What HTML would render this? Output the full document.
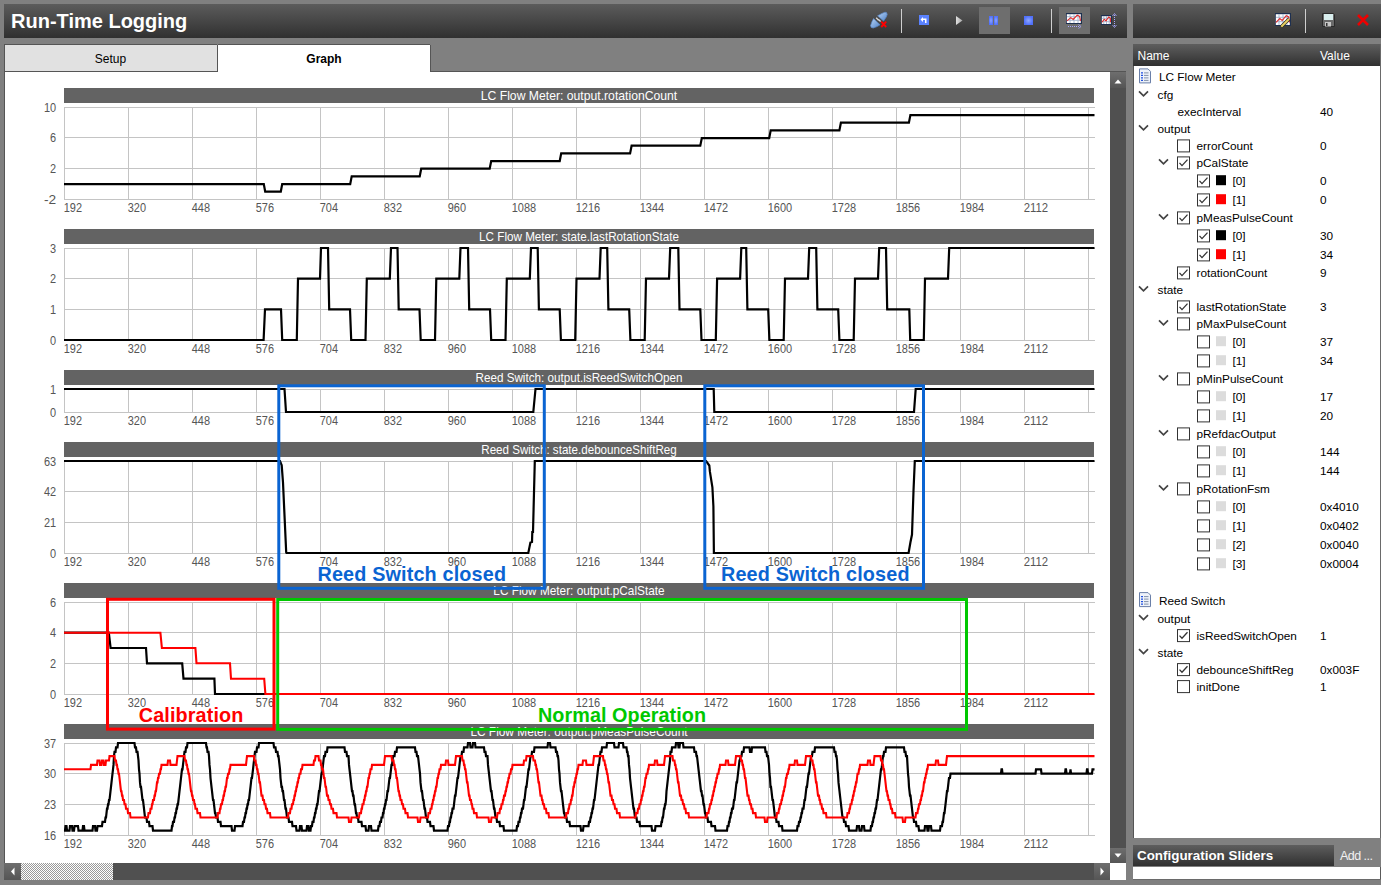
<!DOCTYPE html><html><head><meta charset="utf-8"><style>
html,body{margin:0;padding:0;width:1381px;height:885px;overflow:hidden;background:#808080;}
svg text{font-family:"Liberation Sans", sans-serif;}
</style></head><body>
<svg width="1381" height="885" viewBox="0 0 1381 885" style="position:absolute;left:0;top:0">
<defs>
<linearGradient id="tb" x1="0" y1="0" x2="0" y2="1"><stop offset="0" stop-color="#5c5c5c"/><stop offset="1" stop-color="#303030"/></linearGradient>
<linearGradient id="hd" x1="0" y1="0" x2="0" y2="1"><stop offset="0" stop-color="#5e5e5e"/><stop offset="1" stop-color="#303030"/></linearGradient>
<linearGradient id="sb" x1="0" y1="0" x2="0" y2="1"><stop offset="0" stop-color="#6e6e6e"/><stop offset="1" stop-color="#555"/></linearGradient>
<pattern id="chk" width="2" height="2" patternUnits="userSpaceOnUse"><rect width="2" height="2" fill="#fff"/><rect width="1" height="1" fill="#9a9a9a"/><rect x="1" y="1" width="1" height="1" fill="#9a9a9a"/></pattern>
</defs>
<rect width="1381" height="885" fill="#808080"/>
<rect x="4" y="4" width="1123" height="34" fill="url(#tb)"/>
<text x="11" y="28" fill="#fff" font-size="20" font-weight="bold">Run-Time Logging</text>
<rect x="1133" y="4" width="248" height="34" fill="url(#tb)"/>
<rect x="4.5" y="44.5" width="213" height="27" fill="#e1e1e1" stroke="#555" stroke-width="1"/>
<text x="110.5" y="63" text-anchor="middle" fill="#000" font-size="12">Setup</text>
<rect x="430" y="71" width="696" height="1" fill="#555"/>
<rect x="4" y="72" width="1106" height="791" fill="#fff"/>
<rect x="4" y="72" width="1" height="807" fill="#555"/>
<rect x="217" y="44" width="214" height="28" fill="#fff"/>
<path d="M217.5 72 V44.5 H430.5 V72" fill="none" stroke="#555" stroke-width="1"/>
<text x="324" y="63" text-anchor="middle" fill="#000" font-size="12" font-weight="bold">Graph</text>
<rect x="64" y="88" width="1030" height="15" fill="#636363"/>
<text x="579.0" y="100" text-anchor="middle" fill="#fff" font-size="12.2" textLength="196.5" lengthAdjust="spacingAndGlyphs">LC Flow Meter: output.rotationCount</text>
<path d="M64 107.5H1095 M64 137.5H1095 M64 168.5H1095 M64 199.5H1095 M64.5 107V200 M128.5 107V200 M192.5 107V200 M256.5 107V200 M320.5 107V200 M384.5 107V200 M448.5 107V200 M512.5 107V200 M576.5 107V200 M640.5 107V200 M704.5 107V200 M768.5 107V200 M832.5 107V200 M896.5 107V200 M960.5 107V200 M1024.5 107V200 M1088.5 107V200" stroke="#c4c4c4" stroke-width="1" fill="none" shape-rendering="crispEdges"/>
<text x="56.1" y="111.7" text-anchor="end" fill="#555" font-size="12" textLength="12.2" lengthAdjust="spacingAndGlyphs">10</text>
<text x="56.1" y="142.4" text-anchor="end" fill="#555" font-size="12" textLength="6.1" lengthAdjust="spacingAndGlyphs">6</text>
<text x="56.1" y="173.0" text-anchor="end" fill="#555" font-size="12" textLength="6.1" lengthAdjust="spacingAndGlyphs">2</text>
<text x="56.1" y="203.7" text-anchor="end" fill="#555" font-size="12" textLength="12.2" lengthAdjust="spacingAndGlyphs">-2</text>
<text x="63.7" y="211.5" fill="#555" font-size="12" textLength="18.3" lengthAdjust="spacingAndGlyphs">192</text>
<text x="127.7" y="211.5" fill="#555" font-size="12" textLength="18.3" lengthAdjust="spacingAndGlyphs">320</text>
<text x="191.7" y="211.5" fill="#555" font-size="12" textLength="18.3" lengthAdjust="spacingAndGlyphs">448</text>
<text x="255.7" y="211.5" fill="#555" font-size="12" textLength="18.3" lengthAdjust="spacingAndGlyphs">576</text>
<text x="319.7" y="211.5" fill="#555" font-size="12" textLength="18.3" lengthAdjust="spacingAndGlyphs">704</text>
<text x="383.7" y="211.5" fill="#555" font-size="12" textLength="18.3" lengthAdjust="spacingAndGlyphs">832</text>
<text x="447.7" y="211.5" fill="#555" font-size="12" textLength="18.3" lengthAdjust="spacingAndGlyphs">960</text>
<text x="511.7" y="211.5" fill="#555" font-size="12" textLength="24.4" lengthAdjust="spacingAndGlyphs">1088</text>
<text x="575.7" y="211.5" fill="#555" font-size="12" textLength="24.4" lengthAdjust="spacingAndGlyphs">1216</text>
<text x="639.7" y="211.5" fill="#555" font-size="12" textLength="24.4" lengthAdjust="spacingAndGlyphs">1344</text>
<text x="703.7" y="211.5" fill="#555" font-size="12" textLength="24.4" lengthAdjust="spacingAndGlyphs">1472</text>
<text x="767.7" y="211.5" fill="#555" font-size="12" textLength="24.4" lengthAdjust="spacingAndGlyphs">1600</text>
<text x="831.7" y="211.5" fill="#555" font-size="12" textLength="24.4" lengthAdjust="spacingAndGlyphs">1728</text>
<text x="895.7" y="211.5" fill="#555" font-size="12" textLength="24.4" lengthAdjust="spacingAndGlyphs">1856</text>
<text x="959.7" y="211.5" fill="#555" font-size="12" textLength="24.4" lengthAdjust="spacingAndGlyphs">1984</text>
<text x="1023.7" y="211.5" fill="#555" font-size="12" textLength="24.4" lengthAdjust="spacingAndGlyphs">2112</text>
<rect x="64" y="229" width="1030" height="15" fill="#636363"/>
<text x="579.0" y="241" text-anchor="middle" fill="#fff" font-size="12.2" textLength="199.8" lengthAdjust="spacingAndGlyphs">LC Flow Meter: state.lastRotationState</text>
<path d="M64 248.5H1095 M64 278.5H1095 M64 309.5H1095 M64 340.5H1095 M64.5 248V341 M128.5 248V341 M192.5 248V341 M256.5 248V341 M320.5 248V341 M384.5 248V341 M448.5 248V341 M512.5 248V341 M576.5 248V341 M640.5 248V341 M704.5 248V341 M768.5 248V341 M832.5 248V341 M896.5 248V341 M960.5 248V341 M1024.5 248V341 M1088.5 248V341" stroke="#c4c4c4" stroke-width="1" fill="none" shape-rendering="crispEdges"/>
<text x="56.1" y="252.7" text-anchor="end" fill="#555" font-size="12" textLength="6.1" lengthAdjust="spacingAndGlyphs">3</text>
<text x="56.1" y="283.4" text-anchor="end" fill="#555" font-size="12" textLength="6.1" lengthAdjust="spacingAndGlyphs">2</text>
<text x="56.1" y="314.0" text-anchor="end" fill="#555" font-size="12" textLength="6.1" lengthAdjust="spacingAndGlyphs">1</text>
<text x="56.1" y="344.7" text-anchor="end" fill="#555" font-size="12" textLength="6.1" lengthAdjust="spacingAndGlyphs">0</text>
<text x="63.7" y="352.5" fill="#555" font-size="12" textLength="18.3" lengthAdjust="spacingAndGlyphs">192</text>
<text x="127.7" y="352.5" fill="#555" font-size="12" textLength="18.3" lengthAdjust="spacingAndGlyphs">320</text>
<text x="191.7" y="352.5" fill="#555" font-size="12" textLength="18.3" lengthAdjust="spacingAndGlyphs">448</text>
<text x="255.7" y="352.5" fill="#555" font-size="12" textLength="18.3" lengthAdjust="spacingAndGlyphs">576</text>
<text x="319.7" y="352.5" fill="#555" font-size="12" textLength="18.3" lengthAdjust="spacingAndGlyphs">704</text>
<text x="383.7" y="352.5" fill="#555" font-size="12" textLength="18.3" lengthAdjust="spacingAndGlyphs">832</text>
<text x="447.7" y="352.5" fill="#555" font-size="12" textLength="18.3" lengthAdjust="spacingAndGlyphs">960</text>
<text x="511.7" y="352.5" fill="#555" font-size="12" textLength="24.4" lengthAdjust="spacingAndGlyphs">1088</text>
<text x="575.7" y="352.5" fill="#555" font-size="12" textLength="24.4" lengthAdjust="spacingAndGlyphs">1216</text>
<text x="639.7" y="352.5" fill="#555" font-size="12" textLength="24.4" lengthAdjust="spacingAndGlyphs">1344</text>
<text x="703.7" y="352.5" fill="#555" font-size="12" textLength="24.4" lengthAdjust="spacingAndGlyphs">1472</text>
<text x="767.7" y="352.5" fill="#555" font-size="12" textLength="24.4" lengthAdjust="spacingAndGlyphs">1600</text>
<text x="831.7" y="352.5" fill="#555" font-size="12" textLength="24.4" lengthAdjust="spacingAndGlyphs">1728</text>
<text x="895.7" y="352.5" fill="#555" font-size="12" textLength="24.4" lengthAdjust="spacingAndGlyphs">1856</text>
<text x="959.7" y="352.5" fill="#555" font-size="12" textLength="24.4" lengthAdjust="spacingAndGlyphs">1984</text>
<text x="1023.7" y="352.5" fill="#555" font-size="12" textLength="24.4" lengthAdjust="spacingAndGlyphs">2112</text>
<rect x="64" y="370" width="1030" height="15" fill="#636363"/>
<text x="579.0" y="382" text-anchor="middle" fill="#fff" font-size="12.2" textLength="207" lengthAdjust="spacingAndGlyphs">Reed Switch: output.isReedSwitchOpen</text>
<path d="M64 389.5H1095 M64 412.5H1095 M64.5 389V413 M128.5 389V413 M192.5 389V413 M256.5 389V413 M320.5 389V413 M384.5 389V413 M448.5 389V413 M512.5 389V413 M576.5 389V413 M640.5 389V413 M704.5 389V413 M768.5 389V413 M832.5 389V413 M896.5 389V413 M960.5 389V413 M1024.5 389V413 M1088.5 389V413" stroke="#c4c4c4" stroke-width="1" fill="none" shape-rendering="crispEdges"/>
<text x="56.1" y="393.7" text-anchor="end" fill="#555" font-size="12" textLength="6.1" lengthAdjust="spacingAndGlyphs">1</text>
<text x="56.1" y="416.7" text-anchor="end" fill="#555" font-size="12" textLength="6.1" lengthAdjust="spacingAndGlyphs">0</text>
<text x="63.7" y="424.5" fill="#555" font-size="12" textLength="18.3" lengthAdjust="spacingAndGlyphs">192</text>
<text x="127.7" y="424.5" fill="#555" font-size="12" textLength="18.3" lengthAdjust="spacingAndGlyphs">320</text>
<text x="191.7" y="424.5" fill="#555" font-size="12" textLength="18.3" lengthAdjust="spacingAndGlyphs">448</text>
<text x="255.7" y="424.5" fill="#555" font-size="12" textLength="18.3" lengthAdjust="spacingAndGlyphs">576</text>
<text x="319.7" y="424.5" fill="#555" font-size="12" textLength="18.3" lengthAdjust="spacingAndGlyphs">704</text>
<text x="383.7" y="424.5" fill="#555" font-size="12" textLength="18.3" lengthAdjust="spacingAndGlyphs">832</text>
<text x="447.7" y="424.5" fill="#555" font-size="12" textLength="18.3" lengthAdjust="spacingAndGlyphs">960</text>
<text x="511.7" y="424.5" fill="#555" font-size="12" textLength="24.4" lengthAdjust="spacingAndGlyphs">1088</text>
<text x="575.7" y="424.5" fill="#555" font-size="12" textLength="24.4" lengthAdjust="spacingAndGlyphs">1216</text>
<text x="639.7" y="424.5" fill="#555" font-size="12" textLength="24.4" lengthAdjust="spacingAndGlyphs">1344</text>
<text x="703.7" y="424.5" fill="#555" font-size="12" textLength="24.4" lengthAdjust="spacingAndGlyphs">1472</text>
<text x="767.7" y="424.5" fill="#555" font-size="12" textLength="24.4" lengthAdjust="spacingAndGlyphs">1600</text>
<text x="831.7" y="424.5" fill="#555" font-size="12" textLength="24.4" lengthAdjust="spacingAndGlyphs">1728</text>
<text x="895.7" y="424.5" fill="#555" font-size="12" textLength="24.4" lengthAdjust="spacingAndGlyphs">1856</text>
<text x="959.7" y="424.5" fill="#555" font-size="12" textLength="24.4" lengthAdjust="spacingAndGlyphs">1984</text>
<text x="1023.7" y="424.5" fill="#555" font-size="12" textLength="24.4" lengthAdjust="spacingAndGlyphs">2112</text>
<rect x="64" y="442" width="1030" height="15" fill="#636363"/>
<text x="579.0" y="454" text-anchor="middle" fill="#fff" font-size="12.2" textLength="195.5" lengthAdjust="spacingAndGlyphs">Reed Switch: state.debounceShiftReg</text>
<path d="M64 461.5H1095 M64 491.5H1095 M64 522.5H1095 M64 553.5H1095 M64.5 461V554 M128.5 461V554 M192.5 461V554 M256.5 461V554 M320.5 461V554 M384.5 461V554 M448.5 461V554 M512.5 461V554 M576.5 461V554 M640.5 461V554 M704.5 461V554 M768.5 461V554 M832.5 461V554 M896.5 461V554 M960.5 461V554 M1024.5 461V554 M1088.5 461V554" stroke="#c4c4c4" stroke-width="1" fill="none" shape-rendering="crispEdges"/>
<text x="56.1" y="465.7" text-anchor="end" fill="#555" font-size="12" textLength="12.2" lengthAdjust="spacingAndGlyphs">63</text>
<text x="56.1" y="496.4" text-anchor="end" fill="#555" font-size="12" textLength="12.2" lengthAdjust="spacingAndGlyphs">42</text>
<text x="56.1" y="527.0" text-anchor="end" fill="#555" font-size="12" textLength="12.2" lengthAdjust="spacingAndGlyphs">21</text>
<text x="56.1" y="557.7" text-anchor="end" fill="#555" font-size="12" textLength="6.1" lengthAdjust="spacingAndGlyphs">0</text>
<text x="63.7" y="565.5" fill="#555" font-size="12" textLength="18.3" lengthAdjust="spacingAndGlyphs">192</text>
<text x="127.7" y="565.5" fill="#555" font-size="12" textLength="18.3" lengthAdjust="spacingAndGlyphs">320</text>
<text x="191.7" y="565.5" fill="#555" font-size="12" textLength="18.3" lengthAdjust="spacingAndGlyphs">448</text>
<text x="255.7" y="565.5" fill="#555" font-size="12" textLength="18.3" lengthAdjust="spacingAndGlyphs">576</text>
<text x="319.7" y="565.5" fill="#555" font-size="12" textLength="18.3" lengthAdjust="spacingAndGlyphs">704</text>
<text x="383.7" y="565.5" fill="#555" font-size="12" textLength="18.3" lengthAdjust="spacingAndGlyphs">832</text>
<text x="447.7" y="565.5" fill="#555" font-size="12" textLength="18.3" lengthAdjust="spacingAndGlyphs">960</text>
<text x="511.7" y="565.5" fill="#555" font-size="12" textLength="24.4" lengthAdjust="spacingAndGlyphs">1088</text>
<text x="575.7" y="565.5" fill="#555" font-size="12" textLength="24.4" lengthAdjust="spacingAndGlyphs">1216</text>
<text x="639.7" y="565.5" fill="#555" font-size="12" textLength="24.4" lengthAdjust="spacingAndGlyphs">1344</text>
<text x="703.7" y="565.5" fill="#555" font-size="12" textLength="24.4" lengthAdjust="spacingAndGlyphs">1472</text>
<text x="767.7" y="565.5" fill="#555" font-size="12" textLength="24.4" lengthAdjust="spacingAndGlyphs">1600</text>
<text x="831.7" y="565.5" fill="#555" font-size="12" textLength="24.4" lengthAdjust="spacingAndGlyphs">1728</text>
<text x="895.7" y="565.5" fill="#555" font-size="12" textLength="24.4" lengthAdjust="spacingAndGlyphs">1856</text>
<text x="959.7" y="565.5" fill="#555" font-size="12" textLength="24.4" lengthAdjust="spacingAndGlyphs">1984</text>
<text x="1023.7" y="565.5" fill="#555" font-size="12" textLength="24.4" lengthAdjust="spacingAndGlyphs">2112</text>
<rect x="64" y="583" width="1030" height="15" fill="#636363"/>
<text x="579.0" y="595" text-anchor="middle" fill="#fff" font-size="12.2" textLength="171.3" lengthAdjust="spacingAndGlyphs">LC Flow Meter: output.pCalState</text>
<path d="M64 602.5H1095 M64 632.5H1095 M64 663.5H1095 M64 694.5H1095 M64.5 602V695 M128.5 602V695 M192.5 602V695 M256.5 602V695 M320.5 602V695 M384.5 602V695 M448.5 602V695 M512.5 602V695 M576.5 602V695 M640.5 602V695 M704.5 602V695 M768.5 602V695 M832.5 602V695 M896.5 602V695 M960.5 602V695 M1024.5 602V695 M1088.5 602V695" stroke="#c4c4c4" stroke-width="1" fill="none" shape-rendering="crispEdges"/>
<text x="56.1" y="606.7" text-anchor="end" fill="#555" font-size="12" textLength="6.1" lengthAdjust="spacingAndGlyphs">6</text>
<text x="56.1" y="637.4" text-anchor="end" fill="#555" font-size="12" textLength="6.1" lengthAdjust="spacingAndGlyphs">4</text>
<text x="56.1" y="668.0" text-anchor="end" fill="#555" font-size="12" textLength="6.1" lengthAdjust="spacingAndGlyphs">2</text>
<text x="56.1" y="698.7" text-anchor="end" fill="#555" font-size="12" textLength="6.1" lengthAdjust="spacingAndGlyphs">0</text>
<text x="63.7" y="706.5" fill="#555" font-size="12" textLength="18.3" lengthAdjust="spacingAndGlyphs">192</text>
<text x="127.7" y="706.5" fill="#555" font-size="12" textLength="18.3" lengthAdjust="spacingAndGlyphs">320</text>
<text x="191.7" y="706.5" fill="#555" font-size="12" textLength="18.3" lengthAdjust="spacingAndGlyphs">448</text>
<text x="255.7" y="706.5" fill="#555" font-size="12" textLength="18.3" lengthAdjust="spacingAndGlyphs">576</text>
<text x="319.7" y="706.5" fill="#555" font-size="12" textLength="18.3" lengthAdjust="spacingAndGlyphs">704</text>
<text x="383.7" y="706.5" fill="#555" font-size="12" textLength="18.3" lengthAdjust="spacingAndGlyphs">832</text>
<text x="447.7" y="706.5" fill="#555" font-size="12" textLength="18.3" lengthAdjust="spacingAndGlyphs">960</text>
<text x="511.7" y="706.5" fill="#555" font-size="12" textLength="24.4" lengthAdjust="spacingAndGlyphs">1088</text>
<text x="575.7" y="706.5" fill="#555" font-size="12" textLength="24.4" lengthAdjust="spacingAndGlyphs">1216</text>
<text x="639.7" y="706.5" fill="#555" font-size="12" textLength="24.4" lengthAdjust="spacingAndGlyphs">1344</text>
<text x="703.7" y="706.5" fill="#555" font-size="12" textLength="24.4" lengthAdjust="spacingAndGlyphs">1472</text>
<text x="767.7" y="706.5" fill="#555" font-size="12" textLength="24.4" lengthAdjust="spacingAndGlyphs">1600</text>
<text x="831.7" y="706.5" fill="#555" font-size="12" textLength="24.4" lengthAdjust="spacingAndGlyphs">1728</text>
<text x="895.7" y="706.5" fill="#555" font-size="12" textLength="24.4" lengthAdjust="spacingAndGlyphs">1856</text>
<text x="959.7" y="706.5" fill="#555" font-size="12" textLength="24.4" lengthAdjust="spacingAndGlyphs">1984</text>
<text x="1023.7" y="706.5" fill="#555" font-size="12" textLength="24.4" lengthAdjust="spacingAndGlyphs">2112</text>
<rect x="64" y="724" width="1030" height="15" fill="#636363"/>
<text x="579.0" y="736" text-anchor="middle" fill="#fff" font-size="12.2" textLength="217.2" lengthAdjust="spacingAndGlyphs">LC Flow Meter: output.pMeasPulseCount</text>
<path d="M64 743.5H1095 M64 773.5H1095 M64 804.5H1095 M64 835.5H1095 M64.5 743V836 M128.5 743V836 M192.5 743V836 M256.5 743V836 M320.5 743V836 M384.5 743V836 M448.5 743V836 M512.5 743V836 M576.5 743V836 M640.5 743V836 M704.5 743V836 M768.5 743V836 M832.5 743V836 M896.5 743V836 M960.5 743V836 M1024.5 743V836 M1088.5 743V836" stroke="#c4c4c4" stroke-width="1" fill="none" shape-rendering="crispEdges"/>
<text x="56.1" y="747.7" text-anchor="end" fill="#555" font-size="12" textLength="12.2" lengthAdjust="spacingAndGlyphs">37</text>
<text x="56.1" y="778.4" text-anchor="end" fill="#555" font-size="12" textLength="12.2" lengthAdjust="spacingAndGlyphs">30</text>
<text x="56.1" y="809.0" text-anchor="end" fill="#555" font-size="12" textLength="12.2" lengthAdjust="spacingAndGlyphs">23</text>
<text x="56.1" y="839.7" text-anchor="end" fill="#555" font-size="12" textLength="12.2" lengthAdjust="spacingAndGlyphs">16</text>
<text x="63.7" y="847.5" fill="#555" font-size="12" textLength="18.3" lengthAdjust="spacingAndGlyphs">192</text>
<text x="127.7" y="847.5" fill="#555" font-size="12" textLength="18.3" lengthAdjust="spacingAndGlyphs">320</text>
<text x="191.7" y="847.5" fill="#555" font-size="12" textLength="18.3" lengthAdjust="spacingAndGlyphs">448</text>
<text x="255.7" y="847.5" fill="#555" font-size="12" textLength="18.3" lengthAdjust="spacingAndGlyphs">576</text>
<text x="319.7" y="847.5" fill="#555" font-size="12" textLength="18.3" lengthAdjust="spacingAndGlyphs">704</text>
<text x="383.7" y="847.5" fill="#555" font-size="12" textLength="18.3" lengthAdjust="spacingAndGlyphs">832</text>
<text x="447.7" y="847.5" fill="#555" font-size="12" textLength="18.3" lengthAdjust="spacingAndGlyphs">960</text>
<text x="511.7" y="847.5" fill="#555" font-size="12" textLength="24.4" lengthAdjust="spacingAndGlyphs">1088</text>
<text x="575.7" y="847.5" fill="#555" font-size="12" textLength="24.4" lengthAdjust="spacingAndGlyphs">1216</text>
<text x="639.7" y="847.5" fill="#555" font-size="12" textLength="24.4" lengthAdjust="spacingAndGlyphs">1344</text>
<text x="703.7" y="847.5" fill="#555" font-size="12" textLength="24.4" lengthAdjust="spacingAndGlyphs">1472</text>
<text x="767.7" y="847.5" fill="#555" font-size="12" textLength="24.4" lengthAdjust="spacingAndGlyphs">1600</text>
<text x="831.7" y="847.5" fill="#555" font-size="12" textLength="24.4" lengthAdjust="spacingAndGlyphs">1728</text>
<text x="895.7" y="847.5" fill="#555" font-size="12" textLength="24.4" lengthAdjust="spacingAndGlyphs">1856</text>
<text x="959.7" y="847.5" fill="#555" font-size="12" textLength="24.4" lengthAdjust="spacingAndGlyphs">1984</text>
<text x="1023.7" y="847.5" fill="#555" font-size="12" textLength="24.4" lengthAdjust="spacingAndGlyphs">2112</text>
<polyline points="64.0,184.1 263.8,184.1 265.2,191.7 280.8,191.7 282.2,184.1 350.2,184.1 351.7,176.4 419.7,176.4 421.2,168.7 489.7,168.7 491.2,161.1 559.7,161.1 561.2,153.4 630.1,153.4 631.6,145.7 700.3,145.7 701.8,138.1 769.2,138.1 770.7,130.4 839.4,130.4 840.9,122.7 908.9,122.7 910.4,115.1 1094.5,115.1" fill="none" stroke="#000" stroke-width="2.2" stroke-linejoin="miter" stroke-miterlimit="2"/>
<polyline points="64.0,340.0 263.6,340.0 265.0,309.3 281.0,309.3 282.2,340.0 296.8,340.0 298.0,278.7 320.0,278.7 321.0,248.0 328.0,248.0 329.2,309.3 350.0,309.3 351.2,340.0 365.5,340.0 366.8,278.7 389.8,278.7 391.0,248.0 397.5,248.0 398.7,309.3 419.5,309.3 420.7,340.0 435.0,340.0 436.3,278.7 459.3,278.7 460.5,248.0 468.0,248.0 469.2,309.3 490.0,309.3 491.2,340.0 505.5,340.0 506.8,278.7 529.8,278.7 531.0,248.0 537.7,248.0 538.9,309.3 559.7,309.3 560.9,340.0 575.2,340.0 576.5,278.7 599.5,278.7 600.7,248.0 607.2,248.0 608.4,309.3 629.2,309.3 630.4,340.0 644.7,340.0 646.0,278.7 669.0,278.7 670.2,248.0 678.3,248.0 679.5,309.3 700.3,309.3 701.5,340.0 715.8,340.0 717.1,278.7 740.1,278.7 741.3,248.0 746.2,248.0 747.4,309.3 768.2,309.3 769.4,340.0 783.7,340.0 785.0,278.7 808.0,278.7 809.2,248.0 816.2,248.0 817.4,309.3 838.2,309.3 839.4,340.0 853.7,340.0 855.0,278.7 878.0,278.7 879.2,248.0 886.0,248.0 887.2,309.3 909.3,309.3 910.2,340.0 923.8,340.0 925.0,278.7 948.0,278.7 949.2,248.0 1094.5,248.0" fill="none" stroke="#000" stroke-width="2.2" stroke-linejoin="miter" stroke-miterlimit="2"/>
<polyline points="64.0,389.0 284.5,389.0 286.0,412.0 533.3,412.0 535.5,389.0 713.7,389.0 714.3,412.0 914.0,412.0 915.7,389.0 1094.5,389.0" fill="none" stroke="#000" stroke-width="2.2" stroke-linejoin="miter" stroke-miterlimit="2"/>
<polyline points="64.0,461.0 280.0,461.0 281.7,465.3 283.0,482.5 286.2,552.5 286.5,553.0 528.3,553.0 530.4,542.5 532.0,542.0 532.3,532.0 533.0,532.0 534.8,461.0 706.1,461.0 709.3,465.5 709.9,471.7 712.4,487.3 713.4,506.5 713.9,553.0 908.6,553.0 910.4,542.5 912.0,534.5 913.5,491.0 914.8,461.0 1094.5,461.0" fill="none" stroke="#000" stroke-width="2.2" stroke-linejoin="miter" stroke-miterlimit="2"/>
<polyline points="64.0,632.7 108.8,632.7 110.6,648.0 146.0,648.0 147.0,663.3 182.2,663.3 183.5,678.7 214.4,678.7 215.0,694.0 266.0,694.0" fill="none" stroke="#000" stroke-width="2.2" stroke-linejoin="miter" stroke-miterlimit="2"/>
<polyline points="64.0,632.7 160.4,632.7 161.9,648.0 195.4,648.0 196.5,663.3 230.0,663.3 231.0,678.7 264.2,678.7 265.4,694.0 1094.5,694.0" fill="none" stroke="#ff0000" stroke-width="2.1" stroke-linejoin="miter" stroke-miterlimit="2"/>
<polyline points="64.0,830.6 65.0,830.6 65.5,826.2 66.5,826.2 67.0,830.6 69.5,830.6 70.0,826.2 72.0,826.2 72.5,830.6 74.0,830.6 74.5,826.2 78.0,826.2 78.5,830.6 82.5,830.6 83.0,826.2 84.0,826.2 84.5,830.6 92.5,830.6 93.0,826.2 95.0,826.2 95.5,830.6 97.0,830.6 97.5,826.2 102.0,826.2 102.5,821.9 105.0,821.9 105.5,817.5 106.0,817.5 106.5,813.1 106.5,813.1 107.0,808.7 107.5,808.7 108.0,804.3 108.5,804.3 109.0,800.0 109.5,800.0 110.0,795.6 110.0,795.6 110.5,791.2 110.5,791.2 111.0,786.8 111.0,786.8 111.5,782.4 111.5,782.4 112.0,778.0 112.0,778.0 112.5,773.7 112.5,773.7 113.0,769.3 113.0,769.3 113.5,764.9 113.5,764.9 114.0,756.1 114.0,756.1 114.5,751.8 115.5,751.8 116.0,747.4 117.5,747.4 118.0,743.0 134.5,743.0 135.0,747.4 136.0,747.4 136.5,751.8 137.5,751.8 138.0,756.1 138.0,756.1 138.5,760.5 138.5,760.5 139.0,769.3 139.0,769.3 139.5,773.7 139.5,773.7 140.0,782.4 140.0,782.4 140.5,786.8 141.0,786.8 141.5,791.2 141.5,791.2 142.0,795.6 142.0,795.6 142.5,800.0 143.0,800.0 143.5,804.3 143.5,804.3 144.0,808.7 144.0,808.7 144.5,813.1 144.5,813.1 145.0,817.5 146.5,817.5 147.0,821.9 149.0,821.9 149.5,826.2 152.5,826.2 153.0,830.6 171.5,830.6 172.0,826.2 172.5,826.2 173.0,821.9 174.0,821.9 174.5,817.5 175.0,817.5 175.5,813.1 176.0,813.1 176.5,808.7 177.0,808.7 177.5,804.3 178.0,804.3 178.5,800.0 178.5,800.0 179.0,795.6 179.0,795.6 179.5,791.2 179.5,791.2 180.0,786.8 180.0,786.8 180.5,782.4 180.5,782.4 181.0,778.0 181.0,778.0 181.5,773.7 181.5,773.7 182.0,769.3 182.5,769.3 183.0,764.9 183.0,764.9 183.5,760.5 183.5,760.5 184.0,756.1 184.0,756.1 184.5,751.8 185.5,751.8 186.0,747.4 187.0,747.4 187.5,743.0 206.0,743.0 206.5,747.4 207.0,747.4 207.5,751.8 208.5,751.8 209.0,756.1 209.0,756.1 209.5,764.9 209.5,764.9 210.0,769.3 210.0,769.3 210.5,778.0 210.5,778.0 211.0,782.4 211.0,782.4 211.5,786.8 211.5,786.8 212.0,791.2 212.0,791.2 212.5,795.6 212.5,795.6 213.0,800.0 213.5,800.0 214.0,804.3 214.0,804.3 214.5,808.7 214.5,808.7 215.0,813.1 215.5,813.1 216.0,817.5 217.5,817.5 218.0,821.9 220.5,821.9 221.0,826.2 231.5,826.2 232.0,830.6 234.5,830.6 235.0,826.2 242.5,826.2 243.0,821.9 244.0,821.9 244.5,817.5 245.0,817.5 245.5,813.1 246.0,813.1 246.5,808.7 247.0,808.7 247.5,804.3 248.0,804.3 248.5,800.0 249.0,800.0 249.5,795.6 249.5,795.6 250.0,791.2 250.0,791.2 250.5,786.8 250.5,786.8 251.0,782.4 251.0,782.4 251.5,778.0 252.0,778.0 252.5,773.7 252.5,773.7 253.0,769.3 253.0,769.3 253.5,764.9 253.5,764.9 254.0,760.5 254.0,760.5 254.5,756.1 254.5,756.1 255.0,751.8 256.5,751.8 257.0,747.4 258.5,747.4 259.0,743.0 273.5,743.0 274.0,747.4 275.5,747.4 276.0,751.8 277.5,751.8 278.0,756.1 278.5,756.1 279.0,760.5 279.0,760.5 279.5,764.9 279.5,764.9 280.0,769.3 280.0,769.3 280.5,778.0 280.5,778.0 281.0,782.4 281.0,782.4 281.5,786.8 282.0,786.8 282.5,791.2 283.0,791.2 283.5,795.6 283.5,795.6 284.0,800.0 284.5,800.0 285.0,804.3 285.0,804.3 285.5,808.7 286.0,808.7 286.5,813.1 286.5,813.1 287.0,817.5 288.5,817.5 289.0,821.9 292.0,821.9 292.5,826.2 296.0,826.2 296.5,830.6 299.5,830.6 300.0,826.2 301.5,826.2 302.0,830.6 306.5,830.6 307.0,826.2 308.5,826.2 309.0,830.6 310.5,830.6 311.0,826.2 312.0,826.2 312.5,821.9 313.5,821.9 314.0,817.5 314.5,817.5 315.0,813.1 315.5,813.1 316.0,808.7 316.5,808.7 317.0,804.3 317.5,804.3 318.0,800.0 318.0,800.0 318.5,795.6 318.5,795.6 319.0,791.2 319.5,791.2 320.0,786.8 320.0,786.8 320.5,782.4 320.5,782.4 321.0,778.0 321.0,778.0 321.5,773.7 322.0,773.7 322.5,769.3 322.5,769.3 323.0,764.9 323.0,764.9 323.5,760.5 323.5,760.5 324.0,756.1 325.0,756.1 325.5,751.8 327.0,751.8 327.5,747.4 344.5,747.4 345.0,751.8 346.5,751.8 347.0,756.1 348.5,756.1 349.0,764.9 349.0,764.9 349.5,769.3 349.5,769.3 350.0,773.7 350.0,773.7 350.5,778.0 350.5,778.0 351.0,782.4 351.0,782.4 351.5,786.8 351.5,786.8 352.0,791.2 352.5,791.2 353.0,795.6 353.5,795.6 354.0,800.0 354.0,800.0 354.5,804.3 355.0,804.3 355.5,808.7 355.5,808.7 356.0,813.1 356.5,813.1 357.0,817.5 358.0,817.5 358.5,821.9 361.5,821.9 362.0,826.2 365.5,826.2 366.0,830.6 368.5,830.6 369.0,826.2 371.0,826.2 371.5,830.6 378.0,830.6 378.5,826.2 379.5,826.2 380.0,821.9 381.0,821.9 381.5,817.5 382.5,817.5 383.0,813.1 383.5,813.1 384.0,808.7 384.5,808.7 385.0,804.3 385.5,804.3 386.0,800.0 386.5,800.0 387.0,795.6 387.0,795.6 387.5,791.2 388.0,791.2 388.5,786.8 388.5,786.8 389.0,782.4 389.0,782.4 389.5,778.0 390.0,778.0 390.5,773.7 390.5,773.7 391.0,769.3 391.0,769.3 391.5,764.9 392.0,764.9 392.5,760.5 392.5,760.5 393.0,756.1 394.5,756.1 395.0,751.8 396.5,751.8 397.0,747.4 415.0,747.4 415.5,751.8 416.5,751.8 417.0,756.1 418.0,756.1 418.5,760.5 418.5,760.5 419.0,764.9 419.0,764.9 419.5,769.3 419.5,769.3 420.0,773.7 420.0,773.7 420.5,782.4 420.5,782.4 421.0,786.8 421.0,786.8 421.5,791.2 422.0,791.2 422.5,795.6 422.5,795.6 423.0,800.0 423.5,800.0 424.0,804.3 424.0,804.3 424.5,808.7 425.0,808.7 425.5,813.1 425.5,813.1 426.0,817.5 427.0,817.5 427.5,821.9 430.0,821.9 430.5,826.2 433.5,826.2 434.0,830.6 447.5,830.6 448.0,826.2 449.0,826.2 449.5,821.9 450.0,821.9 450.5,817.5 451.0,817.5 451.5,813.1 452.0,813.1 452.5,808.7 453.5,808.7 454.0,804.3 454.0,804.3 454.5,800.0 454.5,800.0 455.0,795.6 455.5,795.6 456.0,791.2 456.0,791.2 456.5,786.8 456.5,786.8 457.0,782.4 457.0,782.4 457.5,778.0 458.0,778.0 458.5,773.7 458.5,773.7 459.0,769.3 459.0,769.3 459.5,764.9 459.5,764.9 460.0,760.5 460.0,760.5 460.5,756.1 461.5,756.1 462.0,751.8 463.5,751.8 464.0,747.4 467.5,747.4 468.0,743.0 470.0,743.0 470.5,747.4 472.5,747.4 473.0,743.0 475.0,743.0 475.5,747.4 484.0,747.4 484.5,751.8 485.5,751.8 486.0,756.1 487.5,756.1 488.0,764.9 488.0,764.9 488.5,769.3 488.5,769.3 489.0,773.7 489.0,773.7 489.5,778.0 489.5,778.0 490.0,782.4 490.0,782.4 490.5,786.8 490.5,786.8 491.0,791.2 491.5,791.2 492.0,795.6 492.0,795.6 492.5,800.0 493.0,800.0 493.5,804.3 493.5,804.3 494.0,808.7 494.5,808.7 495.0,813.1 495.0,813.1 495.5,817.5 496.5,817.5 497.0,821.9 499.5,821.9 500.0,826.2 503.5,826.2 504.0,830.6 516.5,830.6 517.0,826.2 518.0,826.2 518.5,821.9 519.5,821.9 520.0,817.5 520.5,817.5 521.0,813.1 521.5,813.1 522.0,808.7 523.0,808.7 523.5,804.3 523.5,804.3 524.0,800.0 524.5,800.0 525.0,795.6 525.0,795.6 525.5,791.2 525.5,791.2 526.0,786.8 526.5,786.8 527.0,782.4 527.0,782.4 527.5,778.0 527.5,778.0 528.0,773.7 528.0,773.7 528.5,769.3 529.0,769.3 529.5,764.9 529.5,764.9 530.0,760.5 530.0,760.5 530.5,756.1 531.5,756.1 532.0,751.8 534.0,751.8 534.5,747.4 547.5,747.4 548.0,743.0 550.0,743.0 550.5,747.4 555.5,747.4 556.0,751.8 557.0,751.8 557.5,756.1 558.0,756.1 558.5,760.5 558.5,760.5 559.0,769.3 559.0,769.3 559.5,773.7 559.5,773.7 560.0,782.4 560.0,782.4 560.5,786.8 560.5,786.8 561.0,791.2 561.5,791.2 562.0,795.6 562.0,795.6 562.5,800.0 562.5,800.0 563.0,804.3 563.0,804.3 563.5,808.7 563.5,808.7 564.0,813.1 564.5,813.1 565.0,817.5 566.5,817.5 567.0,821.9 569.5,821.9 570.0,826.2 580.5,826.2 581.0,830.6 583.0,830.6 583.5,826.2 588.5,826.2 589.0,821.9 590.0,821.9 590.5,817.5 591.0,817.5 591.5,813.1 592.0,813.1 592.5,808.7 593.0,808.7 593.5,804.3 593.5,804.3 594.0,800.0 594.5,800.0 595.0,795.6 595.0,795.6 595.5,791.2 595.5,791.2 596.0,786.8 596.0,786.8 596.5,782.4 596.5,782.4 597.0,778.0 597.0,778.0 597.5,773.7 597.5,773.7 598.0,769.3 598.0,769.3 598.5,764.9 599.0,764.9 599.5,760.5 599.5,760.5 600.0,756.1 600.0,756.1 600.5,751.8 601.5,751.8 602.0,747.4 606.5,747.4 607.0,743.0 614.0,743.0 614.5,747.4 618.5,747.4 619.0,743.0 623.0,743.0 623.5,747.4 626.5,747.4 627.0,751.8 627.5,751.8 628.0,756.1 628.5,756.1 629.0,764.9 629.0,764.9 629.5,769.3 629.5,769.3 630.0,778.0 630.0,778.0 630.5,782.4 630.5,782.4 631.0,786.8 631.0,786.8 631.5,791.2 631.5,791.2 632.0,795.6 632.0,795.6 632.5,800.0 632.5,800.0 633.0,804.3 633.0,804.3 633.5,808.7 634.0,808.7 634.5,813.1 634.5,813.1 635.0,817.5 636.5,817.5 637.0,821.9 639.5,821.9 640.0,826.2 651.5,826.2 652.0,830.6 655.0,830.6 655.5,826.2 661.0,826.2 661.5,821.9 662.0,821.9 662.5,817.5 663.0,817.5 663.5,813.1 663.5,813.1 664.0,808.7 664.5,808.7 665.0,804.3 665.5,804.3 666.0,800.0 666.0,800.0 666.5,791.2 666.5,791.2 667.0,786.8 667.0,786.8 667.5,782.4 667.5,782.4 668.0,778.0 668.0,778.0 668.5,773.7 668.5,773.7 669.0,769.3 669.0,769.3 669.5,764.9 669.5,764.9 670.0,760.5 670.0,760.5 670.5,751.8 671.5,751.8 672.0,747.4 675.5,747.4 676.0,743.0 678.0,743.0 678.5,747.4 679.5,747.4 680.0,743.0 683.0,743.0 683.5,747.4 694.0,747.4 694.5,751.8 696.0,751.8 696.5,756.1 697.0,756.1 697.5,760.5 697.5,760.5 698.0,764.9 698.0,764.9 698.5,769.3 698.5,769.3 699.0,773.7 699.0,773.7 699.5,778.0 699.5,778.0 700.0,782.4 700.0,782.4 700.5,786.8 700.5,786.8 701.0,791.2 701.5,791.2 702.0,795.6 702.5,795.6 703.0,800.0 703.0,800.0 703.5,804.3 704.0,804.3 704.5,808.7 704.5,808.7 705.0,813.1 705.5,813.1 706.0,817.5 707.5,817.5 708.0,821.9 711.0,821.9 711.5,826.2 715.0,826.2 715.5,830.6 727.0,830.6 727.5,826.2 728.5,826.2 729.0,821.9 729.5,821.9 730.0,817.5 730.5,817.5 731.0,813.1 731.5,813.1 732.0,808.7 733.0,808.7 733.5,804.3 733.5,804.3 734.0,800.0 734.5,800.0 735.0,795.6 735.0,795.6 735.5,791.2 735.5,791.2 736.0,786.8 736.0,786.8 736.5,782.4 737.0,782.4 737.5,778.0 737.5,778.0 738.0,773.7 738.0,773.7 738.5,769.3 738.5,769.3 739.0,764.9 739.0,764.9 739.5,760.5 740.0,760.5 740.5,756.1 741.5,756.1 742.0,751.8 743.5,751.8 744.0,747.4 749.5,747.4 750.0,751.8 751.5,751.8 752.0,747.4 765.0,747.4 765.5,751.8 766.5,751.8 767.0,756.1 768.0,756.1 768.5,760.5 768.5,760.5 769.0,764.9 769.0,764.9 769.5,773.7 769.5,773.7 770.0,778.0 770.0,778.0 770.5,786.8 771.0,786.8 771.5,791.2 771.5,791.2 772.0,795.6 772.0,795.6 772.5,800.0 773.0,800.0 773.5,804.3 773.5,804.3 774.0,808.7 774.0,808.7 774.5,813.1 774.5,813.1 775.0,817.5 776.0,817.5 776.5,821.9 778.5,821.9 779.0,826.2 782.0,826.2 782.5,830.6 797.0,830.6 797.5,826.2 798.5,826.2 799.0,821.9 800.0,821.9 800.5,817.5 801.0,817.5 801.5,813.1 802.0,813.1 802.5,808.7 803.5,808.7 804.0,804.3 804.0,804.3 804.5,800.0 805.0,800.0 805.5,795.6 805.5,795.6 806.0,791.2 806.0,791.2 806.5,786.8 807.0,786.8 807.5,782.4 807.5,782.4 808.0,778.0 808.0,778.0 808.5,773.7 809.0,773.7 809.5,769.3 809.5,769.3 810.0,764.9 810.0,764.9 810.5,760.5 810.5,760.5 811.0,756.1 812.0,756.1 812.5,751.8 814.5,751.8 815.0,747.4 834.0,747.4 834.5,751.8 835.5,751.8 836.0,756.1 836.5,756.1 837.0,760.5 837.0,760.5 837.5,769.3 837.5,769.3 838.0,773.7 838.0,773.7 838.5,782.4 838.5,782.4 839.0,786.8 839.0,786.8 839.5,791.2 839.5,791.2 840.0,795.6 840.0,795.6 840.5,800.0 840.5,800.0 841.0,804.3 841.0,804.3 841.5,808.7 841.5,808.7 842.0,813.1 842.0,813.1 842.5,817.5 843.5,817.5 844.0,821.9 845.5,821.9 846.0,826.2 848.5,826.2 849.0,830.6 856.5,830.6 857.0,826.2 859.0,826.2 859.5,830.6 861.5,830.6 862.0,826.2 864.0,826.2 864.5,830.6 870.5,830.6 871.0,826.2 872.0,826.2 872.5,821.9 873.0,821.9 873.5,817.5 874.0,817.5 874.5,813.1 875.0,813.1 875.5,808.7 876.0,808.7 876.5,804.3 876.5,804.3 877.0,800.0 877.5,800.0 878.0,795.6 878.0,795.6 878.5,791.2 878.5,791.2 879.0,786.8 879.0,786.8 879.5,782.4 879.5,782.4 880.0,778.0 880.0,778.0 880.5,773.7 880.5,773.7 881.0,769.3 881.5,769.3 882.0,764.9 882.0,764.9 882.5,760.5 882.5,760.5 883.0,756.1 883.5,756.1 884.0,751.8 885.5,751.8 886.0,747.4 904.0,747.4 904.5,751.8 905.5,751.8 906.0,756.1 907.0,756.1 907.5,764.9 907.5,764.9 908.0,773.7 908.0,773.7 908.5,778.0 908.5,778.0 909.0,786.8 909.0,786.8 909.5,791.2 909.5,791.2 910.0,795.6 910.5,795.6 911.0,800.0 911.0,800.0 911.5,804.3 911.5,804.3 912.0,808.7 912.0,808.7 912.5,813.1 912.5,813.1 913.0,817.5 913.5,817.5 914.0,821.9 916.0,821.9 916.5,826.2 918.5,826.2 919.0,830.6 924.5,830.6 925.0,826.2 927.0,826.2 927.5,830.6 928.5,830.6 929.0,826.2 931.0,826.2 931.5,830.6 940.0,830.6 940.5,826.2 942.0,826.2 942.5,821.9 943.0,821.9 943.5,817.5 943.5,817.5 944.0,813.1 944.5,813.1 945.0,808.7 945.0,808.7 945.5,804.3 945.5,804.3 946.0,800.0 946.0,800.0 946.5,795.6 946.5,795.6 947.0,791.2 947.5,791.2 948.0,786.8 948.0,786.8 948.5,782.4 948.5,782.4 949.0,778.0 950.0,778.0 950.5,773.7 1001.0,773.7 1001.5,769.3 1002.0,769.3 1002.5,773.7 1035.5,773.7 1036.0,769.3 1041.0,769.3 1041.5,773.7 1065.0,773.7 1065.5,769.3 1066.0,769.3 1066.5,773.7 1070.0,773.7 1070.5,769.3 1070.5,769.3 1071.0,773.7 1086.5,773.7 1087.0,769.3 1087.5,769.3 1088.0,773.7 1092.0,773.7 1092.5,769.3 1094.5,769.3" fill="none" stroke="#000" stroke-width="2.2" stroke-linejoin="miter" stroke-miterlimit="2"/>
<polyline points="64.0,769.3 90.5,769.3 91.0,764.9 97.0,764.9 97.5,760.5 99.5,760.5 100.0,764.9 101.5,764.9 102.0,760.5 103.5,760.5 104.0,764.9 105.5,764.9 106.0,760.5 109.0,760.5 109.5,756.1 114.5,756.1 115.0,760.5 116.0,760.5 116.5,764.9 117.0,764.9 117.5,769.3 118.0,769.3 118.5,773.7 119.0,773.7 119.5,778.0 119.5,778.0 120.0,782.4 120.0,782.4 120.5,786.8 120.5,786.8 121.0,791.2 121.5,791.2 122.0,795.6 122.5,795.6 123.0,800.0 124.0,800.0 124.5,804.3 125.5,804.3 126.0,808.7 127.5,808.7 128.0,813.1 130.0,813.1 130.5,817.5 148.0,817.5 148.5,813.1 150.0,813.1 150.5,808.7 151.5,808.7 152.0,804.3 152.5,804.3 153.0,800.0 154.0,800.0 154.5,795.6 155.0,795.6 155.5,791.2 156.0,791.2 156.5,786.8 156.5,786.8 157.0,782.4 157.5,782.4 158.0,778.0 158.5,778.0 159.0,773.7 160.0,773.7 160.5,769.3 161.0,769.3 161.5,764.9 167.5,764.9 168.0,760.5 170.0,760.5 170.5,764.9 176.5,764.9 177.0,760.5 177.0,760.5 177.5,756.1 184.5,756.1 185.0,760.5 186.0,760.5 186.5,764.9 187.0,764.9 187.5,769.3 188.0,769.3 188.5,773.7 189.0,773.7 189.5,778.0 189.5,778.0 190.0,782.4 190.0,782.4 190.5,786.8 190.5,786.8 191.0,791.2 191.5,791.2 192.0,795.6 192.5,795.6 193.0,800.0 194.0,800.0 194.5,804.3 195.0,804.3 195.5,808.7 197.0,808.7 197.5,813.1 200.0,813.1 200.5,817.5 217.5,817.5 218.0,813.1 219.5,813.1 220.0,808.7 220.5,808.7 221.0,804.3 222.0,804.3 222.5,800.0 223.0,800.0 223.5,795.6 224.0,795.6 224.5,791.2 225.0,791.2 225.5,786.8 226.0,786.8 226.5,782.4 226.5,782.4 227.0,778.0 227.5,778.0 228.0,773.7 229.0,773.7 229.5,769.3 230.0,769.3 230.5,764.9 246.0,764.9 246.5,760.5 246.5,760.5 247.0,756.1 254.0,756.1 254.5,760.5 255.5,760.5 256.0,764.9 256.5,764.9 257.0,769.3 257.5,769.3 258.0,773.7 258.5,773.7 259.0,778.0 259.0,778.0 259.5,782.4 260.0,782.4 260.5,786.8 260.5,786.8 261.0,791.2 261.0,791.2 261.5,795.6 262.5,795.6 263.0,800.0 264.0,800.0 264.5,804.3 265.5,804.3 266.0,808.7 267.0,808.7 267.5,813.1 270.0,813.1 270.5,817.5 288.0,817.5 288.5,813.1 290.0,813.1 290.5,808.7 291.5,808.7 292.0,804.3 293.0,804.3 293.5,800.0 294.0,800.0 294.5,795.6 295.0,795.6 295.5,791.2 296.0,791.2 296.5,786.8 297.0,786.8 297.5,782.4 298.0,782.4 298.5,778.0 299.0,778.0 299.5,773.7 300.5,773.7 301.0,769.3 302.0,769.3 302.5,764.9 313.5,764.9 314.0,760.5 315.0,760.5 315.5,756.1 318.5,756.1 319.0,760.5 320.5,760.5 321.0,764.9 321.5,764.9 322.0,769.3 323.0,769.3 323.5,773.7 323.5,773.7 324.0,778.0 324.5,778.0 325.0,782.4 325.0,782.4 325.5,786.8 326.0,786.8 326.5,791.2 326.5,791.2 327.0,795.6 328.0,795.6 328.5,800.0 329.5,800.0 330.0,804.3 331.0,804.3 331.5,808.7 333.0,808.7 333.5,813.1 336.5,813.1 337.0,817.5 348.5,817.5 349.0,821.9 351.0,821.9 351.5,817.5 359.0,817.5 359.5,813.1 361.0,813.1 361.5,808.7 362.0,808.7 362.5,804.3 363.5,804.3 364.0,800.0 364.5,800.0 365.0,795.6 365.5,795.6 366.0,791.2 366.5,791.2 367.0,786.8 367.5,786.8 368.0,782.4 368.0,782.4 368.5,778.0 369.0,778.0 369.5,773.7 370.0,773.7 370.5,769.3 371.5,769.3 372.0,764.9 384.0,764.9 384.5,760.5 384.5,760.5 385.0,756.1 391.5,756.1 392.0,760.5 393.5,760.5 394.0,764.9 394.5,764.9 395.0,769.3 395.5,769.3 396.0,773.7 396.0,773.7 396.5,778.0 397.0,778.0 397.5,782.4 397.5,782.4 398.0,786.8 398.0,786.8 398.5,791.2 399.0,791.2 399.5,795.6 400.0,795.6 400.5,800.0 401.5,800.0 402.0,804.3 403.0,804.3 403.5,808.7 405.0,808.7 405.5,813.1 407.5,813.1 408.0,817.5 417.5,817.5 418.0,821.9 420.0,821.9 420.5,817.5 428.0,817.5 428.5,813.1 430.0,813.1 430.5,808.7 431.5,808.7 432.0,804.3 432.5,804.3 433.0,800.0 433.5,800.0 434.0,795.6 434.5,795.6 435.0,791.2 435.5,791.2 436.0,786.8 436.5,786.8 437.0,782.4 437.0,782.4 437.5,778.0 438.0,778.0 438.5,773.7 439.0,773.7 439.5,769.3 440.5,769.3 441.0,764.9 445.5,764.9 446.0,760.5 448.0,760.5 448.5,764.9 455.0,764.9 455.5,760.5 455.5,760.5 456.0,756.1 462.0,756.1 462.5,760.5 463.5,760.5 464.0,764.9 464.5,764.9 465.0,769.3 465.5,769.3 466.0,773.7 466.0,773.7 466.5,778.0 466.5,778.0 467.0,782.4 467.5,782.4 468.0,786.8 468.0,786.8 468.5,791.2 468.5,791.2 469.0,795.6 469.5,795.6 470.0,800.0 471.0,800.0 471.5,804.3 472.0,804.3 472.5,808.7 473.5,808.7 474.0,813.1 476.5,813.1 477.0,817.5 488.5,817.5 489.0,821.9 491.0,821.9 491.5,817.5 497.0,817.5 497.5,813.1 499.5,813.1 500.0,808.7 501.0,808.7 501.5,804.3 502.5,804.3 503.0,800.0 503.5,800.0 504.0,795.6 505.0,795.6 505.5,791.2 506.0,791.2 506.5,786.8 507.0,786.8 507.5,782.4 508.0,782.4 508.5,778.0 509.0,778.0 509.5,773.7 510.5,773.7 511.0,769.3 512.0,769.3 512.5,764.9 523.5,764.9 524.0,760.5 526.0,760.5 526.5,756.1 533.0,756.1 533.5,760.5 535.0,760.5 535.5,764.9 536.0,764.9 536.5,769.3 537.0,769.3 537.5,773.7 537.5,773.7 538.0,778.0 538.0,778.0 538.5,782.4 539.0,782.4 539.5,786.8 539.5,786.8 540.0,791.2 540.0,791.2 540.5,795.6 541.5,795.6 542.0,800.0 542.5,800.0 543.0,804.3 544.0,804.3 544.5,808.7 546.0,808.7 546.5,813.1 548.5,813.1 549.0,817.5 566.0,817.5 566.5,813.1 568.0,813.1 568.5,808.7 569.0,808.7 569.5,804.3 570.5,804.3 571.0,800.0 571.5,800.0 572.0,795.6 572.5,795.6 573.0,791.2 573.0,791.2 573.5,786.8 574.0,786.8 574.5,782.4 575.0,782.4 575.5,778.0 576.0,778.0 576.5,773.7 577.0,773.7 577.5,769.3 578.0,769.3 578.5,764.9 582.5,764.9 583.0,760.5 586.0,760.5 586.5,764.9 593.0,764.9 593.5,760.5 593.5,760.5 594.0,756.1 603.0,756.1 603.5,760.5 604.5,760.5 605.0,764.9 605.5,764.9 606.0,769.3 606.5,769.3 607.0,773.7 607.5,773.7 608.0,778.0 608.0,778.0 608.5,782.4 609.0,782.4 609.5,786.8 609.5,786.8 610.0,791.2 610.0,791.2 610.5,795.6 611.5,795.6 612.0,800.0 613.0,800.0 613.5,804.3 614.5,804.3 615.0,808.7 616.5,808.7 617.0,813.1 619.5,813.1 620.0,817.5 635.5,817.5 636.0,813.1 637.5,813.1 638.0,808.7 639.0,808.7 639.5,804.3 640.5,804.3 641.0,800.0 641.5,800.0 642.0,795.6 642.5,795.6 643.0,791.2 643.5,791.2 644.0,786.8 644.5,786.8 645.0,782.4 645.0,782.4 645.5,778.0 646.0,778.0 646.5,773.7 647.5,773.7 648.0,769.3 648.5,769.3 649.0,764.9 654.5,764.9 655.0,760.5 657.0,760.5 657.5,764.9 664.0,764.9 664.5,760.5 664.5,760.5 665.0,756.1 672.5,756.1 673.0,760.5 674.5,760.5 675.0,764.9 675.5,764.9 676.0,769.3 676.5,769.3 677.0,773.7 677.0,773.7 677.5,778.0 677.5,778.0 678.0,782.4 678.5,782.4 679.0,786.8 679.0,786.8 679.5,791.2 679.5,791.2 680.0,795.6 681.0,795.6 681.5,800.0 682.5,800.0 683.0,804.3 684.0,804.3 684.5,808.7 685.5,808.7 686.0,813.1 688.5,813.1 689.0,817.5 706.5,817.5 707.0,813.1 708.5,813.1 709.0,808.7 709.5,808.7 710.0,804.3 711.0,804.3 711.5,800.0 712.0,800.0 712.5,795.6 713.0,795.6 713.5,791.2 714.0,791.2 714.5,786.8 715.0,786.8 715.5,782.4 716.0,782.4 716.5,778.0 717.0,778.0 717.5,773.7 718.5,773.7 719.0,769.3 719.5,769.3 720.0,764.9 725.5,764.9 726.0,760.5 728.0,760.5 728.5,764.9 735.0,764.9 735.5,760.5 735.5,760.5 736.0,756.1 740.5,756.1 741.0,760.5 742.0,760.5 742.5,764.9 743.0,764.9 743.5,769.3 744.0,769.3 744.5,773.7 744.5,773.7 745.0,778.0 745.5,778.0 746.0,782.4 746.0,782.4 746.5,786.8 746.5,786.8 747.0,791.2 747.0,791.2 747.5,795.6 748.5,795.6 749.0,800.0 749.5,800.0 750.0,804.3 751.0,804.3 751.5,808.7 752.5,808.7 753.0,813.1 755.5,813.1 756.0,817.5 764.5,817.5 765.0,821.9 767.0,821.9 767.5,817.5 776.5,817.5 777.0,813.1 778.5,813.1 779.0,808.7 779.5,808.7 780.0,804.3 781.0,804.3 781.5,800.0 782.0,800.0 782.5,795.6 783.0,795.6 783.5,791.2 784.0,791.2 784.5,786.8 785.0,786.8 785.5,782.4 785.5,782.4 786.0,778.0 786.5,778.0 787.0,773.7 788.0,773.7 788.5,769.3 789.0,769.3 789.5,764.9 794.5,764.9 795.0,760.5 797.0,760.5 797.5,764.9 805.0,764.9 805.5,760.5 805.5,760.5 806.0,756.1 811.0,756.1 811.5,760.5 812.5,760.5 813.0,764.9 813.5,764.9 814.0,769.3 814.5,769.3 815.0,773.7 815.0,773.7 815.5,778.0 815.5,778.0 816.0,782.4 816.5,782.4 817.0,786.8 817.0,786.8 817.5,791.2 817.5,791.2 818.0,795.6 819.0,795.6 819.5,800.0 820.0,800.0 820.5,804.3 821.5,804.3 822.0,808.7 823.0,808.7 823.5,813.1 826.0,813.1 826.5,817.5 847.0,817.5 847.5,813.1 849.0,813.1 849.5,808.7 850.0,808.7 850.5,804.3 851.5,804.3 852.0,800.0 852.5,800.0 853.0,795.6 853.5,795.6 854.0,791.2 854.5,791.2 855.0,786.8 855.5,786.8 856.0,782.4 856.5,782.4 857.0,778.0 857.0,778.0 857.5,773.7 858.5,773.7 859.0,769.3 859.5,769.3 860.0,764.9 867.5,764.9 868.0,760.5 870.0,760.5 870.5,764.9 873.5,764.9 874.0,760.5 874.0,760.5 874.5,756.1 880.5,756.1 881.0,760.5 882.0,760.5 882.5,764.9 883.0,764.9 883.5,769.3 884.0,769.3 884.5,773.7 884.5,773.7 885.0,778.0 885.0,778.0 885.5,782.4 885.5,782.4 886.0,786.8 886.0,786.8 886.5,791.2 887.0,791.2 887.5,795.6 888.0,795.6 888.5,800.0 889.5,800.0 890.0,804.3 890.5,804.3 891.0,808.7 892.0,808.7 892.5,813.1 895.0,813.1 895.5,817.5 902.5,817.5 903.0,821.9 905.0,821.9 905.5,817.5 915.5,817.5 916.0,813.1 917.5,813.1 918.0,808.7 918.5,808.7 919.0,804.3 920.0,804.3 920.5,800.0 921.0,800.0 921.5,795.6 922.0,795.6 922.5,791.2 923.0,791.2 923.5,786.8 923.5,786.8 924.0,782.4 924.5,782.4 925.0,778.0 925.5,778.0 926.0,773.7 926.5,773.7 927.0,769.3 927.5,769.3 928.0,764.9 935.5,764.9 936.0,760.5 938.0,760.5 938.5,764.9 946.0,764.9 946.5,760.5 946.5,760.5 947.0,756.1 1094.5,756.1" fill="none" stroke="#ff0000" stroke-width="2.1" stroke-linejoin="miter" stroke-miterlimit="2"/>
<rect x="278.8" y="385.8" width="265.5" height="202.5" fill="none" stroke="#0a64d2" stroke-width="3"/>
<rect x="704.8" y="385.8" width="218.7" height="202.5" fill="none" stroke="#0a64d2" stroke-width="3"/>
<text x="317.5" y="580.5" fill="#0a64d2" font-size="19.8" font-weight="bold" textLength="188.5" lengthAdjust="spacing">Reed Switch closed</text>
<text x="721" y="580.5" fill="#0a64d2" font-size="19.8" font-weight="bold" textLength="188.5" lengthAdjust="spacing">Reed Switch closed</text>
<rect x="107.5" y="599.3" width="166.5" height="129.8" fill="none" stroke="#ff0000" stroke-width="3"/>
<rect x="277.7" y="599.5" width="688.8" height="129.9" fill="none" stroke="#00c800" stroke-width="3"/>
<text x="138.8" y="722.2" fill="#ff0000" font-size="19.8" font-weight="bold" textLength="104.5" lengthAdjust="spacing">Calibration</text>
<text x="538" y="722" fill="#00c800" font-size="19.8" font-weight="bold" textLength="168" lengthAdjust="spacing">Normal Operation</text>
<rect x="1110" y="72" width="16" height="791" fill="#505050"/>
<rect x="1110" y="72" width="16" height="16" fill="url(#sb)"/>
<path d="M1114.5 83.5 L1118 79.5 L1121.5 83.5Z" fill="#fff"/>
<rect x="1110" y="848" width="16" height="15" fill="url(#sb)"/>
<path d="M1114.5 853.5 L1118 857.5 L1121.5 853.5Z" fill="#fff"/>
<rect x="4" y="863" width="1106" height="17" fill="#505050"/>
<rect x="4" y="863" width="17" height="17" fill="url(#sb)"/>
<path d="M14.5 867.5 L11 871.5 L14.5 875.5Z" fill="#fff"/>
<rect x="21" y="863" width="92" height="17" fill="url(#chk)"/>
<rect x="1094" y="863" width="16" height="17" fill="url(#sb)"/>
<path d="M1100.5 867.5 L1104 871.5 L1100.5 875.5Z" fill="#fff"/>
<rect x="1110" y="863" width="16" height="17" fill="#fff"/>
<defs><linearGradient id="plg" x1="0" y1="0" x2="1" y2="1"><stop offset="0" stop-color="#b8d4f4"/><stop offset="1" stop-color="#4f82c8"/></linearGradient></defs>
<path d="M877.6 15.8 L882.5 13.2 L885 12.2 L886.6 12.6 L887.2 14.4 L886.4 16.8 L883.6 21 Z" fill="url(#plg)" stroke="#5a88c8" stroke-width="0.7"/>
<path d="M873.6 18.6 L880 24.8 L877 26.6 L873.2 28 L871.2 27.4 L870.6 25.6 L872 21.6 Z" fill="url(#plg)" stroke="#5a88c8" stroke-width="0.7"/>
<path d="M876.2 17.8 L878.6 20.2 M878.4 19.4 L880.6 21.6" stroke="#d8d8d8" stroke-width="1.4"/>
<path d="M881.2 21.6 L886.2 27 M886.2 21.6 L881.2 27" stroke="#ff0000" stroke-width="1.9"/>
<rect x="901" y="9" width="1" height="24" fill="#cfcfcf"/>
<rect x="919" y="15" width="10" height="10" fill="#5a82ff"/>
<path d="M920.5 19.5 L923 17 V18.5 H926.5 V23 H925 V20 H923 V22 Z" fill="#fff"/>
<path d="M956 16 L962.5 20.5 L956 25 Z" fill="url(#pl)"/>
<rect x="979" y="7" width="31" height="27" fill="#6e6e6e"/>
<defs><radialGradient id="bl"><stop offset="0" stop-color="#90a8ff"/><stop offset="1" stop-color="#5070fa"/></radialGradient><linearGradient id="pl" x1="0" x2="1"><stop offset="0" stop-color="#e0e0e0"/><stop offset="1" stop-color="#a8a8a8"/></linearGradient></defs>
<rect x="989" y="16" width="4" height="9" fill="url(#bl)"/><rect x="994" y="16" width="4" height="9" fill="url(#bl)"/>
<rect x="1024" y="16" width="9" height="9" fill="url(#bl)"/>
<rect x="1051" y="9" width="1" height="24" fill="#cfcfcf"/>
<rect x="1059" y="7" width="31" height="27" fill="#6e6e6e"/>
<rect x="1066" y="13" width="16" height="11" fill="#1e3050"/><rect x="1066.8" y="14.2" width="14" height="8.8" fill="#fff"/><path d="M1070.0 14V23M1074.0 14V23M1078.0 14V23M1067 16.7H1081M1067 20.3H1081" stroke="#a8b8d0" stroke-width="1"/><path d="M1067 20.9 L1070.8 17.6 L1073.2 19.4 L1077.2 15.2 L1079.6 16.3 L1080.5 20.9" fill="none" stroke="#e02828" stroke-width="1.1"/>
<path d="M1068 26.5 H1080" stroke="#a8a8ff" stroke-width="1" stroke-dasharray="1 1"/><path d="M1078.5 24.5 L1081 26.5 L1078.5 28.5" fill="none" stroke="#a8a8ff" stroke-width="0.8"/>
<rect x="1101" y="15" width="11" height="10" fill="#1e3050"/><rect x="1101.8" y="16.2" width="9" height="7.8" fill="#fff"/><path d="M1103.8 16V24M1106.5 16V24M1109.2 16V24M1102 18.3H1111M1102 21.7H1111" stroke="#a8b8d0" stroke-width="1"/><path d="M1102 22.2 L1104.3 19.2 L1106.0 20.8 L1108.7 17.0 L1110.3 18.0 L1110.5 22.2" fill="none" stroke="#e02828" stroke-width="1.1"/>
<path d="M1114.5 15 V26" stroke="#a8a8ff" stroke-width="1" stroke-dasharray="1 1"/><path d="M1112.5 16 L1114.5 13.5 L1116.5 16 M1112.5 25 L1114.5 27.5 L1116.5 25" fill="none" stroke="#a8a8ff" stroke-width="0.8"/>
<rect x="1275" y="13" width="16" height="13" fill="#1e3050"/><rect x="1275.8" y="14.2" width="14" height="10.8" fill="#fff"/><path d="M1279.0 14V25M1283.0 14V25M1287.0 14V25M1276 17.3H1290M1276 21.7H1290" stroke="#a8b8d0" stroke-width="1"/><path d="M1276 22.4 L1279.8 18.5 L1282.2 20.5 L1286.2 15.6 L1288.6 16.9 L1289.5 22.4" fill="none" stroke="#e02828" stroke-width="1.1"/>
<path d="M1281 27 L1289 19" stroke="#222" stroke-width="3.2"/><path d="M1281.3 26.7 L1289 19" stroke="#e8d060" stroke-width="2"/>
<rect x="1305" y="9" width="1" height="24" fill="#cfcfcf"/>
<path d="M1322.5 13.5 H1333.5 L1334.5 14.5 V26.5 H1322.5 Z" fill="#6a6a6a" stroke="#2a2a2a" stroke-width="1"/>
<rect x="1324" y="14" width="9" height="6" fill="#d8eeee"/>
<rect x="1325" y="22" width="6" height="4.5" fill="#c8c8c8"/><rect x="1326" y="23" width="1.5" height="3" fill="#333"/>
<path d="M1358 15 L1368 25 M1368 15 L1358 25" stroke="#ee0000" stroke-width="2.6"/>
<rect x="1133" y="44" width="247" height="22" fill="url(#hd)"/>
<rect x="1380" y="44" width="1" height="794" fill="#6a6a6a"/>
<text x="1137.5" y="60" fill="#fff" font-size="12">Name</text>
<text x="1320" y="60" fill="#fff" font-size="12">Value</text>
<rect x="1133" y="66" width="247" height="772" fill="#fff"/>
<rect x="1133" y="66" width="1" height="772" fill="#555"/>
<rect x="1133" y="845" width="201" height="21" fill="url(#hd)"/>
<text x="1137" y="860" fill="#fff" font-size="13.4" font-weight="bold">Configuration Sliders</text>
<rect x="1334" y="845" width="47" height="21" fill="#808080"/>
<text x="1340" y="860" fill="#f2f2f2" font-size="12.5" textLength="33" lengthAdjust="spacing">Add ...</text>
<rect x="1133" y="867" width="247" height="12" fill="#fff"/><rect x="1380" y="867" width="1" height="12" fill="#5a5a5a"/><rect x="1133" y="879" width="248" height="1" fill="#6a6a6a"/>
<path d="M1139.5 68.9 H1148 L1150.5 71.4 V82.9 H1139.5Z" fill="#eef2fa" stroke="#6a7fa8" stroke-width="1"/><path d="M1141 72.9h2M1141 75.4h2M1141 77.9h2M1141 80.4h2" stroke="#2050e0" stroke-width="1.2"/><path d="M1144 72.9h4.5M1144 75.4h4.5M1144 77.9h4.5M1144 80.4h4.5" stroke="#8090a8" stroke-width="1"/>
<text x="1159" y="80.7" fill="#000" font-size="11.8">LC Flow Meter</text>
<path d="M1139.0 91.4 L1143.5 95.9 L1148.0 91.4" fill="none" stroke="#444" stroke-width="1.7"/>
<text x="1157.5" y="98.9" fill="#000" font-size="11.8">cfg</text>
<text x="1177.5" y="115.9" fill="#000" font-size="11.8">execInterval</text>
<text x="1320" y="115.9" fill="#000" font-size="11.8">40</text>
<path d="M1139.0 125.4 L1143.5 129.9 L1148.0 125.4" fill="none" stroke="#444" stroke-width="1.7"/>
<text x="1157.5" y="132.9" fill="#000" font-size="11.8">output</text>
<rect x="1177.5" y="139.9" width="12" height="12" fill="#fff" stroke="#333" stroke-width="1"/>
<text x="1196.5" y="149.9" fill="#000" font-size="11.8">errorCount</text>
<text x="1320" y="149.9" fill="#000" font-size="11.8">0</text>
<path d="M1159.0 159.4 L1163.5 163.9 L1168.0 159.4" fill="none" stroke="#444" stroke-width="1.7"/>
<rect x="1177.5" y="156.9" width="12" height="12" fill="#fff" stroke="#333" stroke-width="1"/><path d="M1179.5 162.9 L1182 165.6 L1187.5 159.6" fill="none" stroke="#333" stroke-width="1.3"/>
<text x="1196.5" y="166.9" fill="#000" font-size="11.8">pCalState</text>
<rect x="1197.5" y="174.9" width="12" height="12" fill="#fff" stroke="#333" stroke-width="1"/><path d="M1199.5 180.9 L1202 183.6 L1207.5 177.6" fill="none" stroke="#333" stroke-width="1.3"/>
<rect x="1216" y="175.2" width="10" height="10" fill="#000"/>
<text x="1232.5" y="184.9" fill="#000" font-size="11.8">[0]</text>
<text x="1320" y="184.9" fill="#000" font-size="11.8">0</text>
<rect x="1197.5" y="193.9" width="12" height="12" fill="#fff" stroke="#333" stroke-width="1"/><path d="M1199.5 199.9 L1202 202.6 L1207.5 196.6" fill="none" stroke="#333" stroke-width="1.3"/>
<rect x="1216" y="194.2" width="10" height="10" fill="#ff0000"/>
<text x="1232.5" y="203.9" fill="#000" font-size="11.8">[1]</text>
<text x="1320" y="203.9" fill="#000" font-size="11.8">0</text>
<path d="M1159.0 214.4 L1163.5 218.9 L1168.0 214.4" fill="none" stroke="#444" stroke-width="1.7"/>
<rect x="1177.5" y="211.9" width="12" height="12" fill="#fff" stroke="#333" stroke-width="1"/><path d="M1179.5 217.9 L1182 220.6 L1187.5 214.6" fill="none" stroke="#333" stroke-width="1.3"/>
<text x="1196.5" y="221.9" fill="#000" font-size="11.8">pMeasPulseCount</text>
<rect x="1197.5" y="229.9" width="12" height="12" fill="#fff" stroke="#333" stroke-width="1"/><path d="M1199.5 235.9 L1202 238.6 L1207.5 232.6" fill="none" stroke="#333" stroke-width="1.3"/>
<rect x="1216" y="230.2" width="10" height="10" fill="#000"/>
<text x="1232.5" y="239.9" fill="#000" font-size="11.8">[0]</text>
<text x="1320" y="239.9" fill="#000" font-size="11.8">30</text>
<rect x="1197.5" y="248.9" width="12" height="12" fill="#fff" stroke="#333" stroke-width="1"/><path d="M1199.5 254.9 L1202 257.6 L1207.5 251.6" fill="none" stroke="#333" stroke-width="1.3"/>
<rect x="1216" y="249.2" width="10" height="10" fill="#ff0000"/>
<text x="1232.5" y="258.9" fill="#000" font-size="11.8">[1]</text>
<text x="1320" y="258.9" fill="#000" font-size="11.8">34</text>
<rect x="1177.5" y="266.9" width="12" height="12" fill="#fff" stroke="#333" stroke-width="1"/><path d="M1179.5 272.9 L1182 275.59999999999997 L1187.5 269.59999999999997" fill="none" stroke="#333" stroke-width="1.3"/>
<text x="1196.5" y="276.9" fill="#000" font-size="11.8">rotationCount</text>
<text x="1320" y="276.9" fill="#000" font-size="11.8">9</text>
<path d="M1139.0 286.4 L1143.5 290.9 L1148.0 286.4" fill="none" stroke="#444" stroke-width="1.7"/>
<text x="1157.5" y="293.9" fill="#000" font-size="11.8">state</text>
<rect x="1177.5" y="300.9" width="12" height="12" fill="#fff" stroke="#333" stroke-width="1"/><path d="M1179.5 306.9 L1182 309.59999999999997 L1187.5 303.59999999999997" fill="none" stroke="#333" stroke-width="1.3"/>
<text x="1196.5" y="310.9" fill="#000" font-size="11.8">lastRotationState</text>
<text x="1320" y="310.9" fill="#000" font-size="11.8">3</text>
<path d="M1159.0 320.4 L1163.5 324.9 L1168.0 320.4" fill="none" stroke="#444" stroke-width="1.7"/>
<rect x="1177.5" y="317.9" width="12" height="12" fill="#fff" stroke="#333" stroke-width="1"/>
<text x="1196.5" y="327.9" fill="#000" font-size="11.8">pMaxPulseCount</text>
<rect x="1197.5" y="335.9" width="12" height="12" fill="#fff" stroke="#333" stroke-width="1"/>
<rect x="1216" y="336.2" width="10" height="10" fill="#dcdcdc"/>
<text x="1232.5" y="345.9" fill="#000" font-size="11.8">[0]</text>
<text x="1320" y="345.9" fill="#000" font-size="11.8">37</text>
<rect x="1197.5" y="354.9" width="12" height="12" fill="#fff" stroke="#333" stroke-width="1"/>
<rect x="1216" y="355.2" width="10" height="10" fill="#dcdcdc"/>
<text x="1232.5" y="364.9" fill="#000" font-size="11.8">[1]</text>
<text x="1320" y="364.9" fill="#000" font-size="11.8">34</text>
<path d="M1159.0 375.4 L1163.5 379.9 L1168.0 375.4" fill="none" stroke="#444" stroke-width="1.7"/>
<rect x="1177.5" y="372.9" width="12" height="12" fill="#fff" stroke="#333" stroke-width="1"/>
<text x="1196.5" y="382.9" fill="#000" font-size="11.8">pMinPulseCount</text>
<rect x="1197.5" y="390.9" width="12" height="12" fill="#fff" stroke="#333" stroke-width="1"/>
<rect x="1216" y="391.2" width="10" height="10" fill="#dcdcdc"/>
<text x="1232.5" y="400.9" fill="#000" font-size="11.8">[0]</text>
<text x="1320" y="400.9" fill="#000" font-size="11.8">17</text>
<rect x="1197.5" y="409.9" width="12" height="12" fill="#fff" stroke="#333" stroke-width="1"/>
<rect x="1216" y="410.2" width="10" height="10" fill="#dcdcdc"/>
<text x="1232.5" y="419.9" fill="#000" font-size="11.8">[1]</text>
<text x="1320" y="419.9" fill="#000" font-size="11.8">20</text>
<path d="M1159.0 430.4 L1163.5 434.9 L1168.0 430.4" fill="none" stroke="#444" stroke-width="1.7"/>
<rect x="1177.5" y="427.9" width="12" height="12" fill="#fff" stroke="#333" stroke-width="1"/>
<text x="1196.5" y="437.9" fill="#000" font-size="11.8">pRefdacOutput</text>
<rect x="1197.5" y="445.9" width="12" height="12" fill="#fff" stroke="#333" stroke-width="1"/>
<rect x="1216" y="446.2" width="10" height="10" fill="#dcdcdc"/>
<text x="1232.5" y="455.9" fill="#000" font-size="11.8">[0]</text>
<text x="1320" y="455.9" fill="#000" font-size="11.8">144</text>
<rect x="1197.5" y="464.9" width="12" height="12" fill="#fff" stroke="#333" stroke-width="1"/>
<rect x="1216" y="465.2" width="10" height="10" fill="#dcdcdc"/>
<text x="1232.5" y="474.9" fill="#000" font-size="11.8">[1]</text>
<text x="1320" y="474.9" fill="#000" font-size="11.8">144</text>
<path d="M1159.0 485.4 L1163.5 489.9 L1168.0 485.4" fill="none" stroke="#444" stroke-width="1.7"/>
<rect x="1177.5" y="482.9" width="12" height="12" fill="#fff" stroke="#333" stroke-width="1"/>
<text x="1196.5" y="492.9" fill="#000" font-size="11.8">pRotationFsm</text>
<rect x="1197.5" y="500.9" width="12" height="12" fill="#fff" stroke="#333" stroke-width="1"/>
<rect x="1216" y="501.2" width="10" height="10" fill="#dcdcdc"/>
<text x="1232.5" y="510.9" fill="#000" font-size="11.8">[0]</text>
<text x="1320" y="510.9" fill="#000" font-size="11.8">0x4010</text>
<rect x="1197.5" y="519.9" width="12" height="12" fill="#fff" stroke="#333" stroke-width="1"/>
<rect x="1216" y="520.2" width="10" height="10" fill="#dcdcdc"/>
<text x="1232.5" y="529.9" fill="#000" font-size="11.8">[1]</text>
<text x="1320" y="529.9" fill="#000" font-size="11.8">0x0402</text>
<rect x="1197.5" y="538.9" width="12" height="12" fill="#fff" stroke="#333" stroke-width="1"/>
<rect x="1216" y="539.2" width="10" height="10" fill="#dcdcdc"/>
<text x="1232.5" y="548.9" fill="#000" font-size="11.8">[2]</text>
<text x="1320" y="548.9" fill="#000" font-size="11.8">0x0040</text>
<rect x="1197.5" y="557.9" width="12" height="12" fill="#fff" stroke="#333" stroke-width="1"/>
<rect x="1216" y="558.2" width="10" height="10" fill="#dcdcdc"/>
<text x="1232.5" y="567.9" fill="#000" font-size="11.8">[3]</text>
<text x="1320" y="567.9" fill="#000" font-size="11.8">0x0004</text>
<path d="M1139.5 592.6 H1148 L1150.5 595.1 V606.6 H1139.5Z" fill="#eef2fa" stroke="#6a7fa8" stroke-width="1"/><path d="M1141 596.6h2M1141 599.1h2M1141 601.6h2M1141 604.1h2" stroke="#2050e0" stroke-width="1.2"/><path d="M1144 596.6h4.5M1144 599.1h4.5M1144 601.6h4.5M1144 604.1h4.5" stroke="#8090a8" stroke-width="1"/>
<text x="1159" y="605.4" fill="#000" font-size="11.8">Reed Switch</text>
<path d="M1139.0 615.1 L1143.5 619.6 L1148.0 615.1" fill="none" stroke="#444" stroke-width="1.7"/>
<text x="1157.5" y="622.6" fill="#000" font-size="11.8">output</text>
<rect x="1177.5" y="629.6" width="12" height="12" fill="#fff" stroke="#333" stroke-width="1"/><path d="M1179.5 635.6 L1182 638.3000000000001 L1187.5 632.3000000000001" fill="none" stroke="#333" stroke-width="1.3"/>
<text x="1196.5" y="639.6" fill="#000" font-size="11.8">isReedSwitchOpen</text>
<text x="1320" y="639.6" fill="#000" font-size="11.8">1</text>
<path d="M1139.0 649.1 L1143.5 653.6 L1148.0 649.1" fill="none" stroke="#444" stroke-width="1.7"/>
<text x="1157.5" y="656.6" fill="#000" font-size="11.8">state</text>
<rect x="1177.5" y="663.6" width="12" height="12" fill="#fff" stroke="#333" stroke-width="1"/><path d="M1179.5 669.6 L1182 672.3000000000001 L1187.5 666.3000000000001" fill="none" stroke="#333" stroke-width="1.3"/>
<text x="1196.5" y="673.6" fill="#000" font-size="11.8">debounceShiftReg</text>
<text x="1320" y="673.6" fill="#000" font-size="11.8">0x003F</text>
<rect x="1177.5" y="680.6" width="12" height="12" fill="#fff" stroke="#333" stroke-width="1"/>
<text x="1196.5" y="690.6" fill="#000" font-size="11.8">initDone</text>
<text x="1320" y="690.6" fill="#000" font-size="11.8">1</text>
</svg>
</body></html>
